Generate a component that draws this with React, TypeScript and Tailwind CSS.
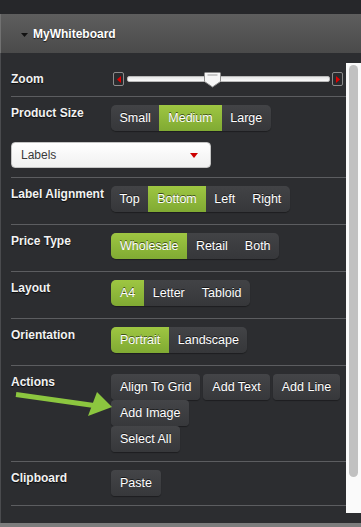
import clsx from "clsx";

const font = "font-['Liberation_Sans',Arial,Helvetica,sans-serif]";

function Segmented({ items, active }: { items: string[]; active: string }) {
    return (
        <div className="flex h-[26px] rounded-[5px] bg-linear-to-b from-[#424346] to-[#36373a] shadow-[0_1px_1px_rgba(0,0,0,0.35)]">
            {items.map((item, i) => (
                <span
                    key={item}
                    className={clsx(
                        "flex items-center px-[8.5px] text-[12.5px] text-white [text-shadow:0_-1px_0_rgba(0,0,0,0.6)]",
                        item === active &&
                            "bg-linear-to-b from-[#9ec642] to-[#80aa33] px-[9px]",
                        i === 0 && "rounded-l-[5px]",
                        i === items.length - 1 && "rounded-r-[5px]"
                    )}
                >
                    {item}
                </span>
            ))}
        </div>
    );
}

function Btn({ children }: { children: string }) {
    return (
        <span className="flex h-[26px] items-center rounded-[4px] bg-linear-to-b from-[#444548] to-[#37383b] px-[9px] text-[12.5px] text-white shadow-[0_1px_1px_rgba(0,0,0,0.35)] [text-shadow:0_-1px_0_rgba(0,0,0,0.6)]">
            {children}
        </span>
    );
}

function Row({
    label,
    children,
    pb = "pb-[12px]",
}: {
    label: string;
    children: React.ReactNode;
    pb?: string;
}) {
    return (
        <>
            <div className={clsx("flex items-start pt-[8px]", pb)}>
                <div className="w-[100px] pt-[1px] text-[12px] leading-[14px] font-bold text-[#f2f2f2] [text-shadow:0_1px_1px_rgba(0,0,0,0.8)]">
                    {label}
                </div>
                {children}
            </div>
            <div className="h-px bg-[#5c5d60]" />
        </>
    );
}

function SliderBtn({ dir }: { dir: "left" | "right" }) {
    return (
        <span className="flex h-[14px] w-[11px] items-center justify-center rounded-[2px] border border-[#8c8c8c] bg-[#2a2b2e]">
            <svg width="4" height="7" viewBox="0 0 4 7">
                {dir === "left" ?
                    <polygon points="4,0 0,3.5 4,7" fill="#e00000" />
                :   <polygon points="0,0 4,3.5 0,7" fill="#e00000" />}
            </svg>
        </span>
    );
}

export default function App() {
    return (
        <div className={clsx("relative h-[527px] w-[361px] overflow-hidden bg-[#7d7d7d]", font)}>
            {/* top strip */}
            <div className="h-[14px] bg-[#26272a]" />

            {/* panel header */}
            <div className="flex h-[39px] items-center border-l border-[#717171] bg-linear-to-b from-[#5e5e5e] to-[#4a4a4a] pl-[20px]">
                <svg width="7" height="4" viewBox="0 0 7 4" className="mt-[2px]">
                    <polygon points="0,0 7,0 3.5,4" fill="#111" />
                </svg>
                <span className="ml-[5px] text-[12px] font-bold text-white [text-shadow:0_1px_1px_rgba(0,0,0,0.7)]">
                    MyWhiteboard
                </span>
            </div>

            {/* body */}
            <div className="flex h-[470px] border-l border-[#4a4b4e] bg-[#2c2d30]">
                <div className="flex w-[345px] flex-col pl-[10px]">
                    {/* Zoom */}
                    <div className="flex h-[16px] items-center mt-[18px] mb-[9px]">
                        <div className="w-[100px] text-[12px] leading-[14px] font-bold text-[#f2f2f2] [text-shadow:0_1px_1px_rgba(0,0,0,0.8)]">
                            Zoom
                        </div>
                        <div className="ml-[2px] flex items-center">
                            <SliderBtn dir="left" />
                            <div className="relative ml-[3px] h-[6px] w-[203px] rounded-[2px] border border-[#b9b9b9] bg-linear-to-b from-[#e6e6e6] to-[#fafafa]">
                                <svg
                                    width="17"
                                    height="16"
                                    viewBox="0 0 17 16"
                                    className="absolute top-[-5px] left-[76px]"
                                >
                                    <path
                                        d="M1.5 0.5 H15.5 a1 1 0 0 1 1 1 V9.5 L8.5 15 L0.5 9.5 V1.5 a1 1 0 0 1 1 -1 Z"
                                        fill="#f7f7f7"
                                        stroke="#8e8e8e"
                                    />
                                    <line x1="3.5" y1="3" x2="13.5" y2="3" stroke="#9a9a9a" />
                                </svg>
                            </div>
                            <span className="ml-[2px]">
                                <SliderBtn dir="right" />
                            </span>
                        </div>
                    </div>
                    <div className="h-px bg-[#5c5d60]" />

                    {/* Product size + select */}
                    <div className="flex flex-col pt-[8px] pb-[9px]">
                        <div className="flex items-start">
                            <div className="w-[100px] pt-[1px] text-[12px] leading-[14px] font-bold text-[#f2f2f2] [text-shadow:0_1px_1px_rgba(0,0,0,0.8)]">
                                Product Size
                            </div>
                            <Segmented items={["Small", "Medium", "Large"]} active="Medium" />
                        </div>
                        <div className="mt-[11px] flex h-[26px] w-[200px] items-center justify-between rounded-[4px] border border-[#c4c4c4] bg-linear-to-b from-[#ffffff] to-[#f0f0f0] pr-[12px] pl-[9px]">
                            <span className="text-[12px] text-[#3a3a3a]">Labels</span>
                            <svg width="8" height="5" viewBox="0 0 8 5">
                                <polygon points="0,0 8,0 4,5" fill="#cc0000" />
                            </svg>
                        </div>
                    </div>
                    <div className="h-px bg-[#5c5d60]" />

                    <Row label="Label Alignment">
                        <Segmented items={["Top", "Bottom", "Left", "Right"]} active="Bottom" />
                    </Row>
                    <Row label="Price Type">
                        <Segmented items={["Wholesale", "Retail", "Both"]} active="Wholesale" />
                    </Row>
                    <Row label="Layout">
                        <Segmented items={["A4", "Letter", "Tabloid"]} active="A4" />
                    </Row>
                    <Row label="Orientation">
                        <Segmented items={["Portrait", "Landscape"]} active="Portrait" />
                    </Row>
                    <Row label="Actions" pb="pb-[9px]">
                        <div className="flex w-[235px] flex-wrap gap-x-[3px]">
                            <Btn>Align To Grid</Btn>
                            <Btn>Add Text</Btn>
                            <Btn>Add Line</Btn>
                            <Btn>Add Image</Btn>
                            <div className="w-full" />
                            <Btn>Select All</Btn>
                        </div>
                    </Row>
                    <Row label="Clipboard" pb="pb-[9px]">
                        <Btn>Paste</Btn>
                    </Row>
                </div>

                {/* scrollbar */}
                <div className="mt-[10px] h-[450px] w-[15px] bg-[#fafafa] pt-[2px] pl-[3px]">
                    <div className="h-[412px] w-[9px] rounded-full bg-[#c1c1c1]" />
                </div>
            </div>

            {/* annotation arrow */}
            <svg
                width="361"
                height="527"
                className="pointer-events-none absolute top-0 left-0"
            >
                <line x1="16" y1="394.5" x2="94" y2="405.5" stroke="#8cc63f" strokeWidth="5" />
                <polygon points="97,392 112,407 88,416" fill="#8cc63f" />
            </svg>
        </div>
    );
}
